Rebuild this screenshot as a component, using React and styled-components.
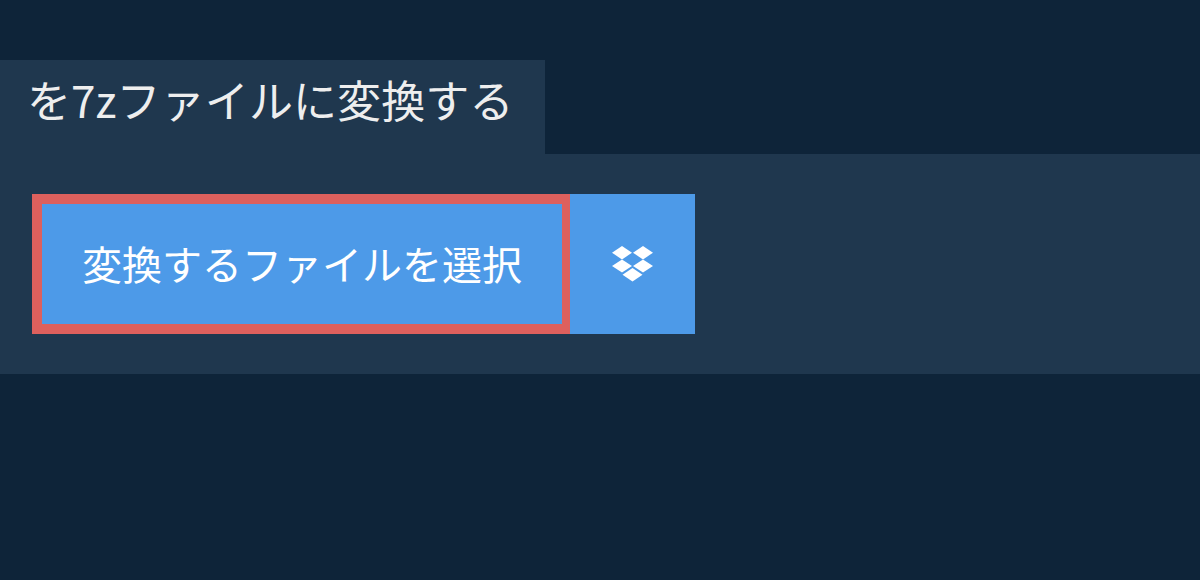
import styled, { createGlobalStyle } from "styled-components";

const GlobalStyle = createGlobalStyle`
  html, body {
    margin: 0;
    padding: 0;
    background: #0e2439;
  }
  body {
    font-family: "Noto Sans CJK JP", "Noto Sans", sans-serif;
  }
`;

const Page = styled.main`
  height: 580px;
  padding-top: 60px;
  box-sizing: border-box;
  overflow: hidden;
`;

const Title = styled.h1`
  width: 545px;
  height: 94px;
  margin: 0;
  padding: 10px 0 0 27px;
  box-sizing: border-box;
  background: #1f374e;
  color: #eee;
  font-size: 44px;
  font-weight: 400;
  letter-spacing: 0.1px;
  line-height: 58px;
  white-space: nowrap;
`;

const Panel = styled.section`
  display: flex;
  height: 220px;
  padding: 40px 32px;
  box-sizing: border-box;
  background: #1f374e;
`;

const SelectButton = styled.button`
  width: 538px;
  height: 140px;
  padding: 0 0 3px 40px;
  box-sizing: border-box;
  border: solid #dd605d;
  border-width: 10px 8px 10px 10px;
  background: #4d9ae8;
  color: #fff;
  font: inherit;
  font-size: 40px;
  text-align: left;
  white-space: nowrap;
`;

const DropboxButton = styled.button`
  display: flex;
  align-items: center;
  justify-content: center;
  width: 125px;
  height: 140px;
  padding: 0;
  border: 0;
  background: #4d9ae8;
`;

const DropboxIcon = () => (
  <svg width="41" height="36" viewBox="0 0 41 36" fill="#fff">
    <path d="M10 0 20 6.7 10 13.4 0 6.7z" />
    <path d="M31 0 41 6.7 31 13.4 21 6.7z" />
    <path d="M10 13.4 20 20 10 26.6 0 20z" />
    <path d="M31 13.4 41 20 31 26.6 21 20z" />
    <path d="M20.5 22 30.5 28.7 20.5 35.4 10.5 28.7z" />
  </svg>
);

export default function App() {
  return (
    <Page>
      <GlobalStyle />
      <Title>を7zファイルに変換する</Title>
      <Panel>
        <SelectButton>変換するファイルを選択</SelectButton>
        <DropboxButton aria-label="Dropbox">
          <DropboxIcon />
        </DropboxButton>
      </Panel>
    </Page>
  );
}
